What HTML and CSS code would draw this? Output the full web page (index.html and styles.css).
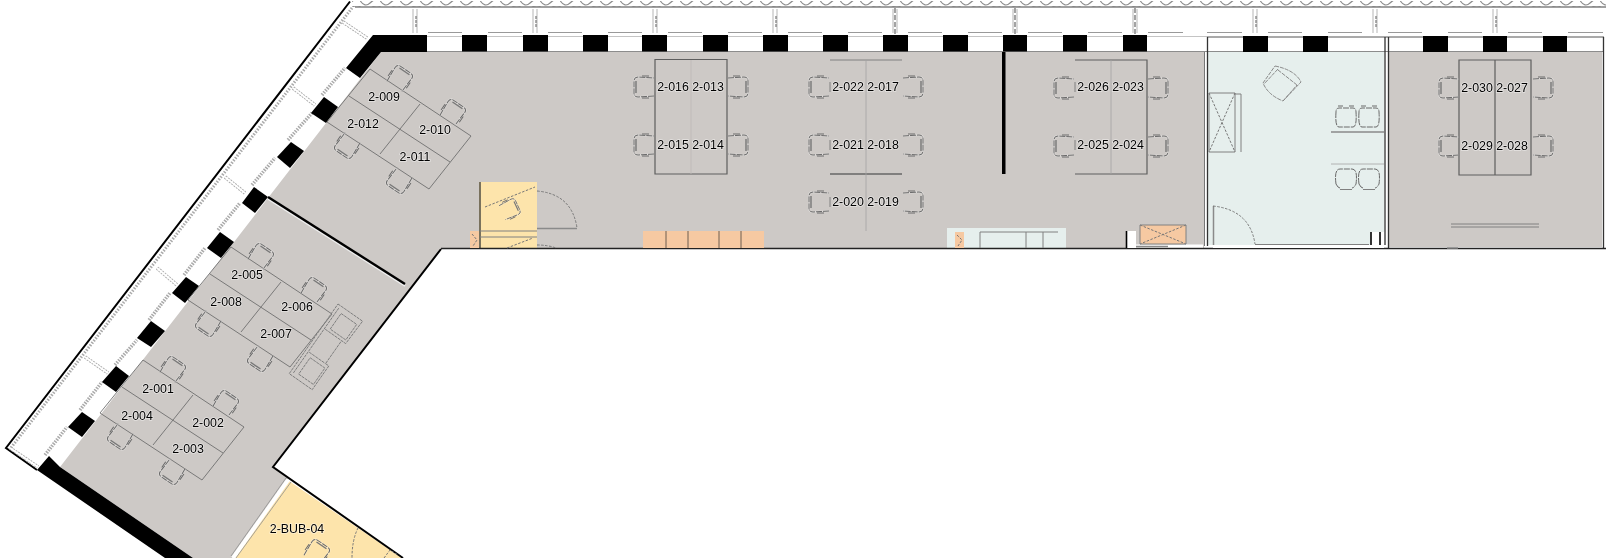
FILE: index.html
```html
<!DOCTYPE html>
<html lang="en">
<head>
<meta charset="utf-8">
<title>Floor plan, level 2</title>
<link rel="stylesheet" href="styles.css">
</head>
<body>
<svg class="plan" width="1606" height="558" viewBox="0 0 1606 558" xmlns="http://www.w3.org/2000/svg">
  <defs>
    <pattern id="wave" width="20" height="6" patternUnits="userSpaceOnUse">
      <path class="wave-line" d="M0,0.5 Q5,8 10,3 T20,0.5"/>
    </pattern>
    <g id="chair">
      <path class="halo" d="M-10,-9 L6,-10 Q10,-10 10,-6 L10,6 Q10,10 6,10 L-10,9"/>
      <path class="ch" d="M-10,-9 L6,-10 Q10,-10 10,-6 L10,6 Q10,10 6,10 L-10,9"/>
      <path class="ch-back" d="M8,-6 V6"/>
      <path class="ch-arm" d="M-5,-11 H2 M-5,11 H2"/>
    </g>
    <g id="pod">
      <path class="desk" d="M143,360 L244,427 L202,480 L100,413 Z M122,387 L223,453 M193,395 L153,445"/>
      <use href="#chair" transform="translate(173,369) rotate(-56)"/>
      <use href="#chair" transform="translate(226,403) rotate(-56)"/>
      <use href="#chair" transform="translate(120,437) rotate(124)"/>
      <use href="#chair" transform="translate(172,472) rotate(124)"/>
    </g>
    <g id="tub">
      <path class="ch" d="M-10,-5 Q-11,10 -7,10 H7 Q11,10 10,-5 Q10,-9 7,-9 H-7 Q-10,-9 -10,-5"/>
      <path class="ch-arm" d="M-8,-11 H-3 M3,-11 H8"/>
    </g>
    <g id="tub-low">
      <path class="ch" d="M-10,5 Q-12,-10 -6,-10 H6 Q12,-10 10,5 Q8,9 6,9 M-10,5 Q-8,9 -6,9"/>
      <path class="ch-foot" d="M-6,10.5 H6"/>
    </g>
  </defs>

  <g class="art">
  <!-- floor areas -->
  <polygon class="floor" points="381,52 1204,52 1204,248 441,248 273,467 288,478 232,558 193,558 60,467"/>
  <polygon class="yellow" points="289,481 402,558 233,558"/>
  <rect class="mint" x="1208" y="52" width="176" height="193"/>
  <rect class="floor" x="1389" y="52" width="213" height="195"/>
  <rect class="yellow" x="479" y="182" width="58" height="66"/>
  <rect class="mint" x="947" y="228" width="119" height="20"/>

  <!-- curtain wall, top -->
  <rect class="wave-fill" x="352" y="1" width="1254" height="6"/>
  <path class="line-soft-wide" d="M355,7 H1606"/>
  <path class="line-soft" d="M427,36.5 H1207"/>
  <path class="line-dark-thin" d="M1207,37 H1604"/>
  <path class="line-mid" d="M427,51.5 H1604"/>
  <path class="head" d="M428,32.5 H462 M488,32.5 H522 M548,32.5 H582 M608,32.5 H642 M668,32.5 H702 M728,32.5 H762 M788,32.5 H822 M848,32.5 H882 M908,32.5 H942 M968,32.5 H1002 M1028,32.5 H1062 M1088,32.5 H1122 M1148,32.5 H1183 M1207,32.5 H1242 M1268,32.5 H1302 M1328,32.5 H1362 M1388,32.5 H1422 M1448,32.5 H1482 M1508,32.5 H1542 M1568,32.5 H1603"/>
  <path class="mull" d="M413,9 V33 M417,9 V33 M533,9 V33 M537,9 V33 M653,9 V33 M657,9 V33 M773,9 V33 M777,9 V33 M893,9 V33 M897,9 V33 M1013,9 V33 M1017,9 V33 M1133,9 V33 M1137,9 V33 M1253,9 V33 M1257,9 V33 M1373,9 V33 M1377,9 V33 M1493,9 V33 M1497,9 V33"/>
  <path class="mull-core" d="M416,16 V28 M536,16 V28 M656,16 V28 M776,16 V28 M1256,16 V28 M1376,16 V28 M1496,16 V28"/>
  <path class="mull-core-dark" d="M895,8 V34 M1015,8 V34 M1135,8 V34"/>
  <g class="pier">
    <polygon points="373,35 427,35 427,52 381,52 360,78 346,68"/>
    <rect x="462" y="35" width="25" height="16.5"/><rect x="523" y="35" width="25" height="16.5"/>
    <rect x="583" y="35" width="25" height="16.5"/><rect x="642" y="35" width="25" height="16.5"/>
    <rect x="703" y="35" width="25" height="16.5"/><rect x="763" y="35" width="25" height="16.5"/>
    <rect x="823" y="35" width="25" height="16.5"/><rect x="883" y="35" width="25" height="16.5"/>
    <rect x="943" y="35" width="25" height="16.5"/><rect x="1003" y="35" width="24" height="16.5"/>
    <rect x="1063" y="35" width="24" height="16.5"/><rect x="1123" y="35" width="24" height="16.5"/>
    <rect x="1243" y="36" width="25" height="16"/><rect x="1303" y="36" width="25" height="16"/>
    <rect x="1423" y="36" width="25" height="16"/><rect x="1483" y="36" width="24" height="16"/>
    <rect x="1543" y="36" width="24" height="16"/>
  </g>

  <!-- curtain wall, diagonal -->
  <path class="outer" d="M350,1.5 L6,448 L37,470"/>
  <path class="hatch" d="M352,8 L10,449"/>
  <path class="dhead" d="M322,95 L345,68 M288,140 L312,113 M252,185 L275,158 M218,230 L240,203 M184,275 L205,248 M149,320 L170,293 M115,365 L137,340 M80,410 L102,382 M45,455 L67,427"/>
  <path class="dmull" d="M343,22 L367,38 M293,88 L315,105 M225,177 L245,193 M157,268 L177,285 M85,357 L108,373 M10,448 L38,467"/>
  <path class="dmull-core" d="M343,22 L367,38 M293,88 L315,105 M225,177 L245,193 M157,268 L177,285 M85,357 L108,373 M10,448 L38,467"/>
  <g class="pier">
    <polygon points="324,97 338,107 326,123 311,113"/>
    <polygon points="291,142 304,151 290,168 277,157"/>
    <polygon points="254,187 268,197 255,213 242,203"/>
    <polygon points="220,232 234,242 221,258 207,248"/>
    <polygon points="186,277 199,286 185,303 172,293"/>
    <polygon points="151,321 165,331 151,347 137,338"/>
    <polygon points="116,366 129,376 116,392 102,382"/>
    <polygon points="82,412 95,421 82,437 68,427"/>
    <polygon points="49,456 60,467 193,558 165,558 37,470"/>
  </g>

  <!-- partitions -->
  <path class="glass-white" d="M288,480 L233,558"/>
  <path class="glass-edge" d="M286,478 L231,556 M291,482 L236,558"/>
  <path class="partition-halo" d="M268,199 L405,286"/>
  <path class="partition" d="M268,197 L405,284"/>
  <rect class="pier" x="1002" y="52" width="3.5" height="122"/>
  <path class="wall-soft" d="M1204.5,52 V246"/>
  <path class="wall" d="M1207.5,37 V246 M1385,37 V245 M1388.5,37 V248 M1603.5,37 V248"/>
  <path class="outer" d="M441,249 L273,467 L403,558"/>
  <path class="outer-thin" d="M441,248.5 H1606"/>

  <!-- desk pods, diagonal wing -->
  <use href="#pod"/>
  <use href="#pod" transform="translate(88,-113)"/>
  <use href="#pod" transform="translate(227,-291)"/>
  <g transform="translate(338,304) rotate(35)">
    <path class="sofa" d="M0,0 H30 L29,28 H24 V56 H28 V85 H0 Z M3,3 V82 M8,6 H27 V25 H8 Z M4,28 H24 M4,56 H24 M8,60 H26 V80 H8 Z"/>
  </g>

  <!-- desk rows -->
  <path class="desk-strong" d="M655,59.5 H727 V174 H655 Z"/>
  <path class="desk-faint" d="M691,60 V174"/>
  <path class="desk-line" d="M830,60 H902"/>
  <path class="desk-bold" d="M830,174 H902"/>
  <path class="desk-thin" d="M866,60 V231"/>
  <path class="desk-line" d="M830,82 V92 M830,140 V150 M830,197 V207 M1075,82 V92 M1075,140 V150"/>
  <path class="desk-strong" d="M1075,60 H1147 V174 H1075"/>
  <path class="desk-thin" d="M1111,60 V174"/>
  <path class="desk-strong" d="M1459,60 H1531 V175 H1459 Z M1495,60 V175"/>

  <use href="#chair" transform="translate(644,87) rotate(180)"/>
  <use href="#chair" transform="translate(644,145) rotate(180)"/>
  <use href="#chair" transform="translate(738,87)"/>
  <use href="#chair" transform="translate(738,145)"/>
  <use href="#chair" transform="translate(819,87) rotate(180)"/>
  <use href="#chair" transform="translate(819,145) rotate(180)"/>
  <use href="#chair" transform="translate(819,202) rotate(180)"/>
  <use href="#chair" transform="translate(913,87)"/>
  <use href="#chair" transform="translate(913,145)"/>
  <use href="#chair" transform="translate(913,202)"/>
  <use href="#chair" transform="translate(1064,88) rotate(180)"/>
  <use href="#chair" transform="translate(1064,146) rotate(180)"/>
  <use href="#chair" transform="translate(1158,88)"/>
  <use href="#chair" transform="translate(1158,146)"/>
  <use href="#chair" transform="translate(1449,88) rotate(180)"/>
  <use href="#chair" transform="translate(1449,146) rotate(180)"/>
  <use href="#chair" transform="translate(1543,88)"/>
  <use href="#chair" transform="translate(1543,146)"/>

  <!-- yellow booth -->
  <path class="wall" d="M480,182 V248"/>
  <path class="desk-line" d="M480,231 H537 M480,237 H537"/>
  <path class="dash" d="M485,207 L535,187 M507,248 L533,238"/>
  <use href="#chair" transform="translate(510,209) rotate(-25) scale(.85)"/>
  <path class="dash" d="M537,191 Q572,194 577,228 M537,245 Q548,245 556,248"/>
  <path class="door-leaf" d="M537,228.5 H577"/>

  <!-- storage and kitchen units -->
  <rect class="orange" x="643" y="231" width="121" height="17"/>
  <path class="divider" d="M666,231 V248 M688,231 V248 M719,231 V248 M741,231 V248"/>
  <rect class="orange" x="470" y="231" width="9" height="17"/>
  <path class="dash" d="M472,234 L477,240 L473,246"/>
  <rect class="orange" x="955" y="232" width="9" height="16"/>
  <path class="dash" d="M957,235 L962,240 L958,246"/>
  <path class="desk-line" d="M980,248 V232 H1026 V248 M1026,232 H1058 M1043,232 V248"/>
  <rect class="white-box" x="1126" y="231" width="10" height="17"/>
  <path class="pier-line" d="M1126.5,231 V248"/>
  <path class="white-strip" d="M1136,246 H1203"/>
  <path class="door-leaf" d="M1136,246.5 H1168"/>
  <rect class="orange" x="1140" y="225" width="46" height="19"/>
  <path class="dash" d="M1140,225 L1186,244 M1186,225 L1140,244"/>
  <path class="desk-line" d="M1140,225 H1186 V244 H1140 Z"/>

  <!-- mint room -->
  <path class="lounge" d="M1275,66 Q1295,70 1301,82 L1283,101 Q1268,95 1263,83 Z M1278,69 L1264,84 M1278,70 L1297,85 M1283,101 L1297,85"/>
  <path class="desk-line" d="M1209,93 H1235 V152 H1209 Z M1235,94 H1241 V152"/>
  <path class="dash" d="M1209,93 L1235,152 M1235,93 L1209,152"/>
  <use href="#tub" transform="translate(1346,117)"/>
  <use href="#tub" transform="translate(1369,117)"/>
  <use href="#tub-low" transform="translate(1346,179)"/>
  <use href="#tub-low" transform="translate(1369,179)"/>
  <path class="door-leaf" d="M1331,132 H1384"/>
  <path class="desk-thin" d="M1331,164 H1384"/>
  <path class="door-leaf" d="M1213.5,206 V245"/>
  <path class="dash" d="M1213,206 Q1250,210 1255,244"/>
  <rect class="white-strip-fill" x="1213" y="245" width="171" height="3"/>
  <path class="desk-line" d="M1255,244.5 H1369"/>
  <rect class="white-box" x="1370" y="232" width="14" height="13"/>
  <path class="pier-line" d="M1371,232 V245 M1380,232 V245"/>

  <!-- end room bench -->
  <path class="desk-line" d="M1451,224 H1539 M1451,227 H1539"/>
  <path class="door-leaf" d="M1447,248 H1458"/>

  <!-- lower wing booth -->
  <path class="dash" d="M358,528 Q352,540 352,558"/>
  <use href="#chair" transform="translate(317,552) rotate(-56)"/>
  <path class="dash" d="M384,558 L390,550 L398,555"/>
  </g>

  <!-- seat labels -->
  <g class="labels">
    <text x="158" y="389">2-001</text><text x="208" y="423">2-002</text>
    <text x="188" y="449">2-003</text><text x="137" y="416">2-004</text>
    <text x="247" y="275">2-005</text><text x="297" y="307">2-006</text>
    <text x="276" y="334">2-007</text><text x="226" y="302">2-008</text>
    <text x="384" y="97">2-009</text><text x="435" y="130">2-010</text>
    <text x="415" y="157">2-011</text><text x="363" y="124">2-012</text>
    <text x="708" y="87">2-013</text><text x="708" y="145">2-014</text>
    <text x="673" y="145">2-015</text><text x="673" y="87">2-016</text>
    <text x="883" y="87">2-017</text><text x="883" y="145">2-018</text>
    <text x="883" y="202">2-019</text><text x="848" y="202">2-020</text>
    <text x="848" y="145">2-021</text><text x="848" y="87">2-022</text>
    <text x="1128" y="87">2-023</text><text x="1128" y="145">2-024</text>
    <text x="1093" y="145">2-025</text><text x="1093" y="87">2-026</text>
    <text x="1512" y="88">2-027</text><text x="1512" y="146">2-028</text>
    <text x="1477" y="146">2-029</text><text x="1477" y="88">2-030</text>
    <text x="297" y="529">2-BUB-04</text>
  </g>
</svg>
</body>
</html>
```

FILE: styles.css
```css
html, body {
  margin: 0;
  background: #fff;
}

.plan {
  display: block;
}

.art {
  filter: blur(0.4px);
}

.floor { fill: #cdc9c6; }
.yellow { fill: #fde4ab; }
.mint { fill: #e6efed; }
.orange { fill: #f6c9a2; }
.pier { fill: #000; }
.white-box, .white-strip-fill { fill: #fff; }

path { fill: none; }

.wave-fill { fill: url(#wave); }
.wave-line { stroke: #8c8c8c; stroke-width: 1.1; }

.line-soft { stroke: #c4c4c4; stroke-width: 1; }
.line-soft-wide { stroke: #808080; stroke-width: 1.5; }
.line-mid { stroke: #8c8c8c; stroke-width: 1; }
.line-dark-thin { stroke: #555; stroke-width: 1; }
.head { stroke: #999; stroke-width: 1; }
.mull { stroke: #b5b5b5; stroke-width: 1; }
.mull-core { stroke: #777; stroke-width: 1.2; stroke-dasharray: 3 1; }
.mull-core-dark { stroke: #666; stroke-width: 1.2; stroke-dasharray: 5 2; }

.outer { stroke: #000; stroke-width: 2; }
.outer-thin { stroke: #222; stroke-width: 1.5; }
.hatch { stroke: #aaa; stroke-width: 3; stroke-dasharray: 1.5 1.5; }
.dhead { stroke: #aaa; stroke-width: 3.5; stroke-dasharray: 1.5 1.2; }
.dmull { stroke: #aaa; stroke-width: 3.6; stroke-dasharray: 2 1; }
.dmull-core { stroke: #fff; stroke-width: 1.8; }

.glass-white { stroke: #fff; stroke-width: 4; }
.glass-edge { stroke: #8f8f8f; stroke-width: 0.8; }
.partition { stroke: #000; stroke-width: 2.4; }
.partition-halo { stroke: #eee; stroke-width: 1.6; }
.wall { stroke: #333; stroke-width: 1.3; }
.wall-soft { stroke: #777; stroke-width: 1; }

.desk { stroke: #6f6f6f; stroke-width: 0.9; }
.desk-strong { stroke: #5e5e5e; stroke-width: 1.2; }
.desk-line { stroke: #808080; stroke-width: 1; }
.desk-bold { stroke: #666; stroke-width: 1.6; }
.desk-thin { stroke: #a3a3a3; stroke-width: 0.8; }
.desk-faint { stroke: #bdb9b6; stroke-width: 0.8; }
.door-leaf { stroke: #8a8a8a; stroke-width: 1.5; }
.divider { stroke: #5e5248; stroke-width: 0.9; }
.dash { stroke: #777; stroke-width: 1; stroke-dasharray: 2.5 1.5; }
.sofa { stroke: #7d7d7d; stroke-width: 0.9; stroke-dasharray: 3 0.8; }
.lounge { stroke: #8a8a8a; stroke-width: 1; stroke-dasharray: 4 1; }
.pier-line { stroke: #000; stroke-width: 1.6; }
.white-strip { stroke: #fff; stroke-width: 3; }

.halo { stroke: rgba(255, 255, 255, 0.3); stroke-width: 2.2; }
.ch { stroke: #6a6a6a; stroke-width: 1; stroke-dasharray: 6 1; }
.ch-back { stroke: #777; stroke-width: 1.4; }
.ch-arm { stroke: #6a6a6a; stroke-width: 1; }
.ch-foot { stroke: #808080; stroke-width: 1; }

.labels {
  filter: blur(0.2px);
}

.labels text {
  font-family: "Liberation Sans", Arial, sans-serif;
  font-size: 12.4px;
  fill: #000;
  text-anchor: middle;
  dominant-baseline: central;
  stroke: rgba(255, 255, 255, 0.5);
  stroke-width: 1.6px;
  paint-order: stroke;
}
```
